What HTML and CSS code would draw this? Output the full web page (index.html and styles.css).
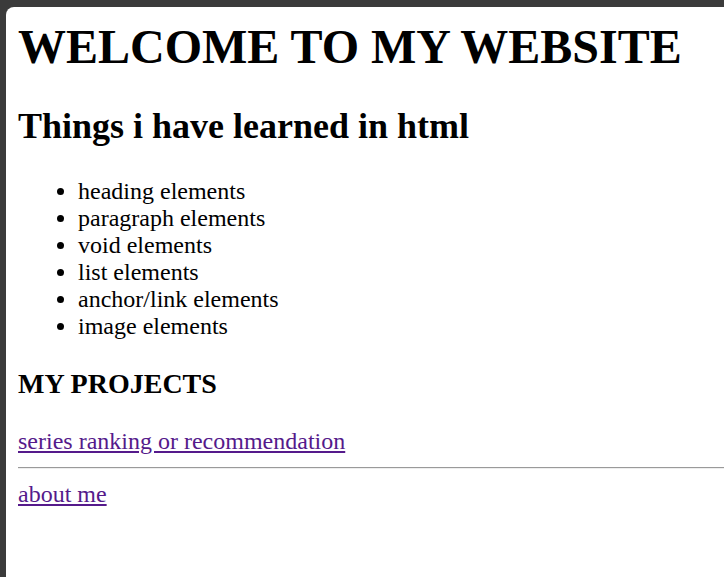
FILE: index.html
```html
<!DOCTYPE html>
<html>
<head>
<meta charset="utf-8">
<link rel="stylesheet" href="styles.css">
</head>
<body>
<div class="frame">
  <div class="page">
    <h1 class="title">WELCOME TO MY WEBSITE</h1>
    <h2 class="subtitle">Things i have learned in html</h2>
    <ul class="learned">
      <li>heading elements</li>
      <li>paragraph elements</li>
      <li>void elements</li>
      <li>list elements</li>
      <li>anchor/link elements</li>
      <li>image elements</li>
    </ul>
    <h3 class="section">MY PROJECTS</h3>
    <div class="line"><a class="link" href="#">series ranking or recommendation</a></div>
    <hr class="rule">
    <div class="line"><a class="link" href="#">about me</a></div>
  </div>
</div>
</body>
</html>
```
FILE: styles.css
```css
html, body {
  margin: 0;
  padding: 0;
  overflow: hidden;
}
body {
  background: #3b3b3b;
  font-family: "Liberation Serif", "Times New Roman", serif;
  color: #000;
}
.frame {
  height: 577px;
  padding: 7px 0 0 6px;
  box-sizing: border-box;
  overflow: hidden;
}
.page {
  background: #fff;
  border-top-left-radius: 8px;
  width: 800px;
  height: 600px;
  padding: 12px 0 0 12px;
  box-sizing: border-box;
}
.title {
  font-size: 48px;
  font-weight: bold;
  margin: 0 0 31px;
  white-space: nowrap;
}
.subtitle {
  font-size: 36px;
  font-weight: bold;
  margin: 0 0 31px;
}
.learned {
  font-size: 24px;
  margin: 0 0 28px;
  padding-left: 60px;
}
.section {
  font-size: 28px;
  font-weight: bold;
  margin: 0 0 28px;
}
.line {
  font-size: 24px;
}
.link {
  color: #551a8b;
  text-decoration: underline;
}
.rule {
  margin: 12px 0;
  border: 0;
  border-top: 1px solid #9a9a9a;
  border-bottom: 1px solid #eeeeee;
  height: 0;
}
```
